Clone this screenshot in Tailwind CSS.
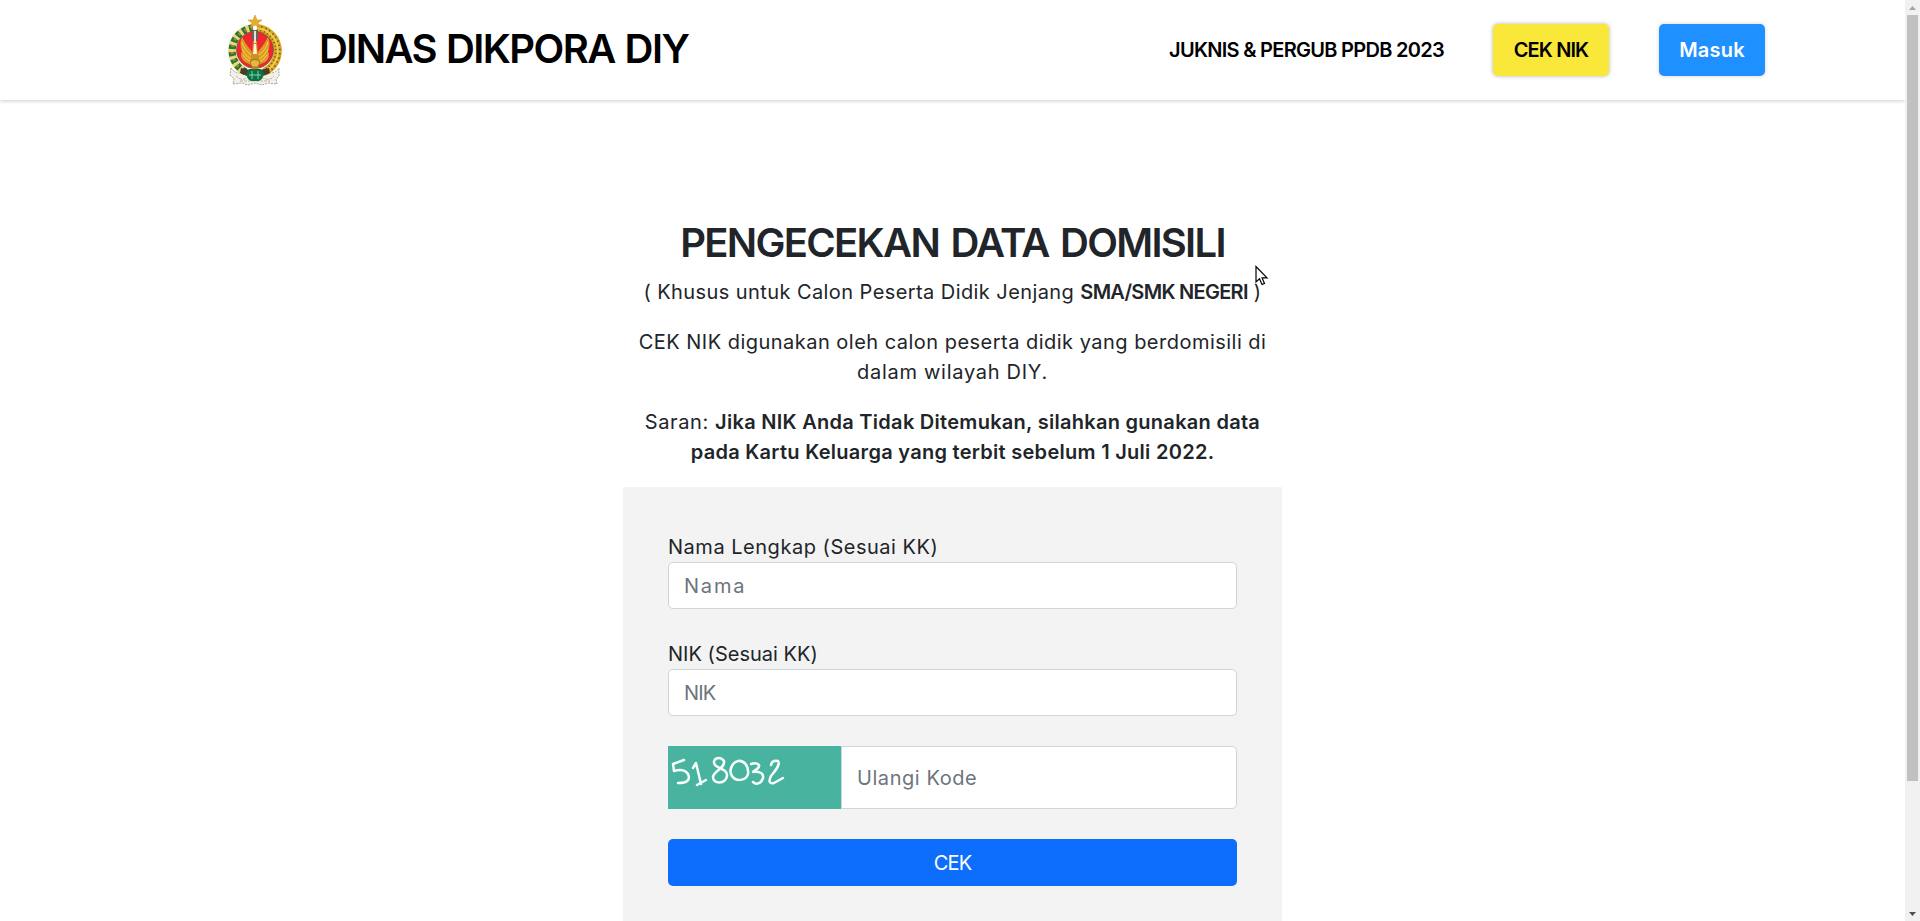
<!DOCTYPE html>
<html lang="id">
<head>
<meta charset="utf-8">
<title>PPDB DIY</title>
<script src="https://cdn.jsdelivr.net/npm/@tailwindcss/browser@4"></script>
</head>
<body class="h-[921px] overflow-hidden bg-white font-['Inter','Liberation_Sans',sans-serif] text-[20px] leading-[30px] text-[#212529]">
<div class="flex h-[921px] overflow-hidden">
  <div class="h-[921px] w-[1905px] overflow-hidden">
    <header class="flex h-[100px] items-center pr-[140px] pl-[228px] text-black shadow-[0_1px_4px_rgba(0,0,0,0.2)]">
      <svg class="mt-[2px] h-[72px] w-[54px] shrink-0" viewBox="0 0 54 72" fill="none">
        <path d="M3 53q6 8 12 3l7 3h10l7-3q6 5 12-3l0 8-3 3 1 5-9-1-6 2-7-2-7 2-6-2-9 1 1-5-4-4z" fill="#f2f0e8" stroke="#aaa594" stroke-width="1" stroke-dasharray="2 1"/>
        <path d="M8 61q6 6 12 1m14 0q7 5 12-1M12 66h30" stroke="#b9b4a4" stroke-dasharray="3 1"/>
        <path d="M25 13A23 23 0 0 0 18 57" stroke="#e9d77c" stroke-width="8"/>
        <path d="M25 13A23 23 0 0 0 18 57" stroke="#27733c" stroke-width="7" stroke-dasharray="4 3"/>
        <path d="M25 13A23 23 0 0 0 18 57" stroke="#a58a26" stroke-width="3" stroke-dasharray="2 5"/>
        <path d="M29 13A23 23 0 0 1 36 57" stroke="#d9a81f" stroke-width="8"/>
        <path d="M29 13A23 23 0 0 1 36 57" stroke="#68531a" stroke-width="6" stroke-dasharray="1 3"/>
        <path d="M29 13A23 23 0 0 1 36 57" stroke="#f0cb55" stroke-width="2"/>
        <circle cx="27" cy="35" r="18.500" fill="#ed2630" stroke="#62501e" stroke-width=".7"/>
        <path d="M14 22q-3 7 0 14-3 6 3 11l6 3 3-6q-1-7-5-11-4-5-7-11zM40 22q3 7 0 14 3 6-3 11l-6 3-3-6q1-7 5-11 4-5 7-11z" fill="#dc9c22"/>
        <path d="M14 27q2 8 9 13M14 34q3 7 9 10M15 40q3 5 8 7M40 27q-2 8-9 13M40 34q-3 7-9 10M39 40q-3 5-8 7" stroke="#f5cf58"/>
        <path d="M25 26h4l1 14 2 6-2 8h-6l-2-8 2-6z" fill="#cf8e22"/>
        <path d="M26 29h2l1 10h-4z" fill="#fff4d2"/>
        <path d="M24 15h6v10h-6z" fill="#66645d"/><path d="M27 16v12" stroke="#e7e3d8" stroke-width="2"/>
        <path d="M22 47q5-5 10 0l-2 5h-6z" fill="#e8b73b" stroke="#835d1c" stroke-width=".7"/>
        <path d="M13 53l9 2-3 6-7-3zM41 53l-9 2 3 6 7-3z" fill="#4a3b2b"/>
        <path d="M21 54h12l3 5-2 5-3 2h-8l-3-2-2-5z" fill="#087345"/><path d="M24 56v8m6-8v8m-9-4h12" stroke="#8fd1a2"/>
        <path d="M27 0l2 5h5l-4 3 2 5-5-3-5 3 2-5-4-3h5z" fill="#e7ae2d" stroke="#c98b20" stroke-width=".5"/>
      </svg>
      <div class="ml-[37px] -mt-[3px] text-[40px] leading-[60px] font-semibold tracking-[-1.6px] [word-spacing:1.500px] whitespace-nowrap">DINAS DIKPORA DIY</div>
      <nav class="ml-auto flex items-center font-semibold whitespace-nowrap">
        <a class="mr-[49px] w-[275px] tracking-[-0.71px]">JUKNIS &amp; PERGUB PPDB 2023</a>
        <a class="mr-[50px] flex h-[52px] w-[116px] items-center justify-center rounded-[5px] bg-[#f9e739] tracking-[-0.9px] shadow-[0_0_4px_rgba(0,0,0,0.3)]">CEK NIK</a>
        <a class="flex h-[52px] w-[106px] items-center justify-center rounded-[5px] bg-[#1e90ff] tracking-[0.2px] text-white shadow-[0_0_4px_rgba(0,0,0,0.18)]">Masuk</a>
      </nav>
    </header>
    <main class="mx-auto mt-[119px] w-[659px]">
      <div class="text-center whitespace-nowrap">
        <h1 class="text-[40px] leading-[48px] font-semibold tracking-[-1.7px] [word-spacing:3px]">PENGECEKAN DATA DOMISILI</h1>
        <p class="mt-[10px] tracking-[0.42px]">( Khusus untuk Calon Peserta Didik Jenjang <b class="font-semibold tracking-[-0.71px]">SMA/SMK NEGERI</b> )</p>
        <p class="mt-5 tracking-[0.48px]">CEK NIK digunakan oleh calon peserta didik yang berdomisili di<br><span class="tracking-[0.72px]">dalam wilayah DIY.</span></p>
        <p class="mt-5 tracking-[0.6px]">Saran: <b class="font-semibold tracking-[0.28px]">Jika NIK Anda Tidak Ditemukan, silahkan gunakan data<br>pada Kartu Keluarga yang terbit sebelum 1 Juli 2022.</b></p>
      </div>
      <form class="mt-5 h-[460px] bg-[#f3f3f3] px-[45px] pt-[45px]">
        <label class="block tracking-[0.52px]">Nama Lengkap (Sesuai KK)</label>
        <div class="flex h-[47px] items-center rounded-[5px] border border-[#ced4da] bg-white px-[15px] tracking-[1.8px] text-[#6c757d]">Nama</div>
        <label class="mt-[30px] block tracking-[0.02px]">NIK (Sesuai KK)</label>
        <div class="flex h-[47px] items-center rounded-[5px] border border-[#ced4da] bg-white px-[15px] tracking-[-0.9px] text-[#6c757d]">NIK</div>
        <div class="mt-[30px] flex h-[63px]">
          <svg class="h-[63px] w-[173px] shrink-0 bg-[#48b39f]" viewBox="0 0 173 63" fill="none" stroke="#f7fffd" stroke-width="2.5" stroke-linecap="round" stroke-linejoin="round">
            <path d="M16 14L5 18l1 7q10-3 14 3 4 9-10 9"/>
            <path d="M25 22l3-5 5 21m-4 1l9-5"/>
            <path d="M56 15c-4-6-13-2-9 4 3 4 13 4 12 11-1 8-14 9-14 1 1-7 12-8 11-16"/>
            <path d="M70 15c-5 1-10 9-6 15 4 6 14 5 16-2 1-8-4-14-10-13z"/>
            <path d="M83 18q5-2 8 1c1 4-5 5-6 7 6-1 11 1 10 6-2 6-7 7-10 4"/>
            <path d="M103 19q1-5 7-4c3 4-4 11-7 15-3 6-1 8 3 7l9-5"/>
          </svg>
          <div class="flex flex-1 items-center rounded-r-[5px] border border-[#ced4da] bg-white pl-[15px] tracking-[0.56px] text-[#6c757d]">Ulangi Kode</div>
        </div>
        <button type="button" class="mt-[30px] block h-[47px] w-full rounded-[5px] bg-[#0d6efd] tracking-[-0.8px] text-white">CEK</button>
      </form>
    </main>
  </div>
  <div class="flex h-[921px] w-[15px] shrink-0 flex-col items-center bg-[#f1f1f1]">
    <svg class="h-[15px] w-[15px]" viewBox="0 0 15 15"><path d="M4 10l3.500-4 3.500 4z" fill="#a3a3a3"/></svg>
    <div class="h-[766px] w-[11px] bg-[#c1c1c1]"></div>
    <svg class="mt-auto h-[15px] w-[15px]" viewBox="0 0 15 15"><path d="M4 6l3.500 4L11 6z" fill="#505050"/></svg>
  </div>
</div>
<svg class="absolute top-[265px] left-[1255px] h-[22px] w-[14px]" viewBox="0 0 14 22"><path d="M1 1.500V17l3.500-3.200L7 19.500l2.500-1.100-2.400-5.500H12z" fill="#fff" stroke="#000" stroke-width="1.200"/></svg>
</body>
</html>
